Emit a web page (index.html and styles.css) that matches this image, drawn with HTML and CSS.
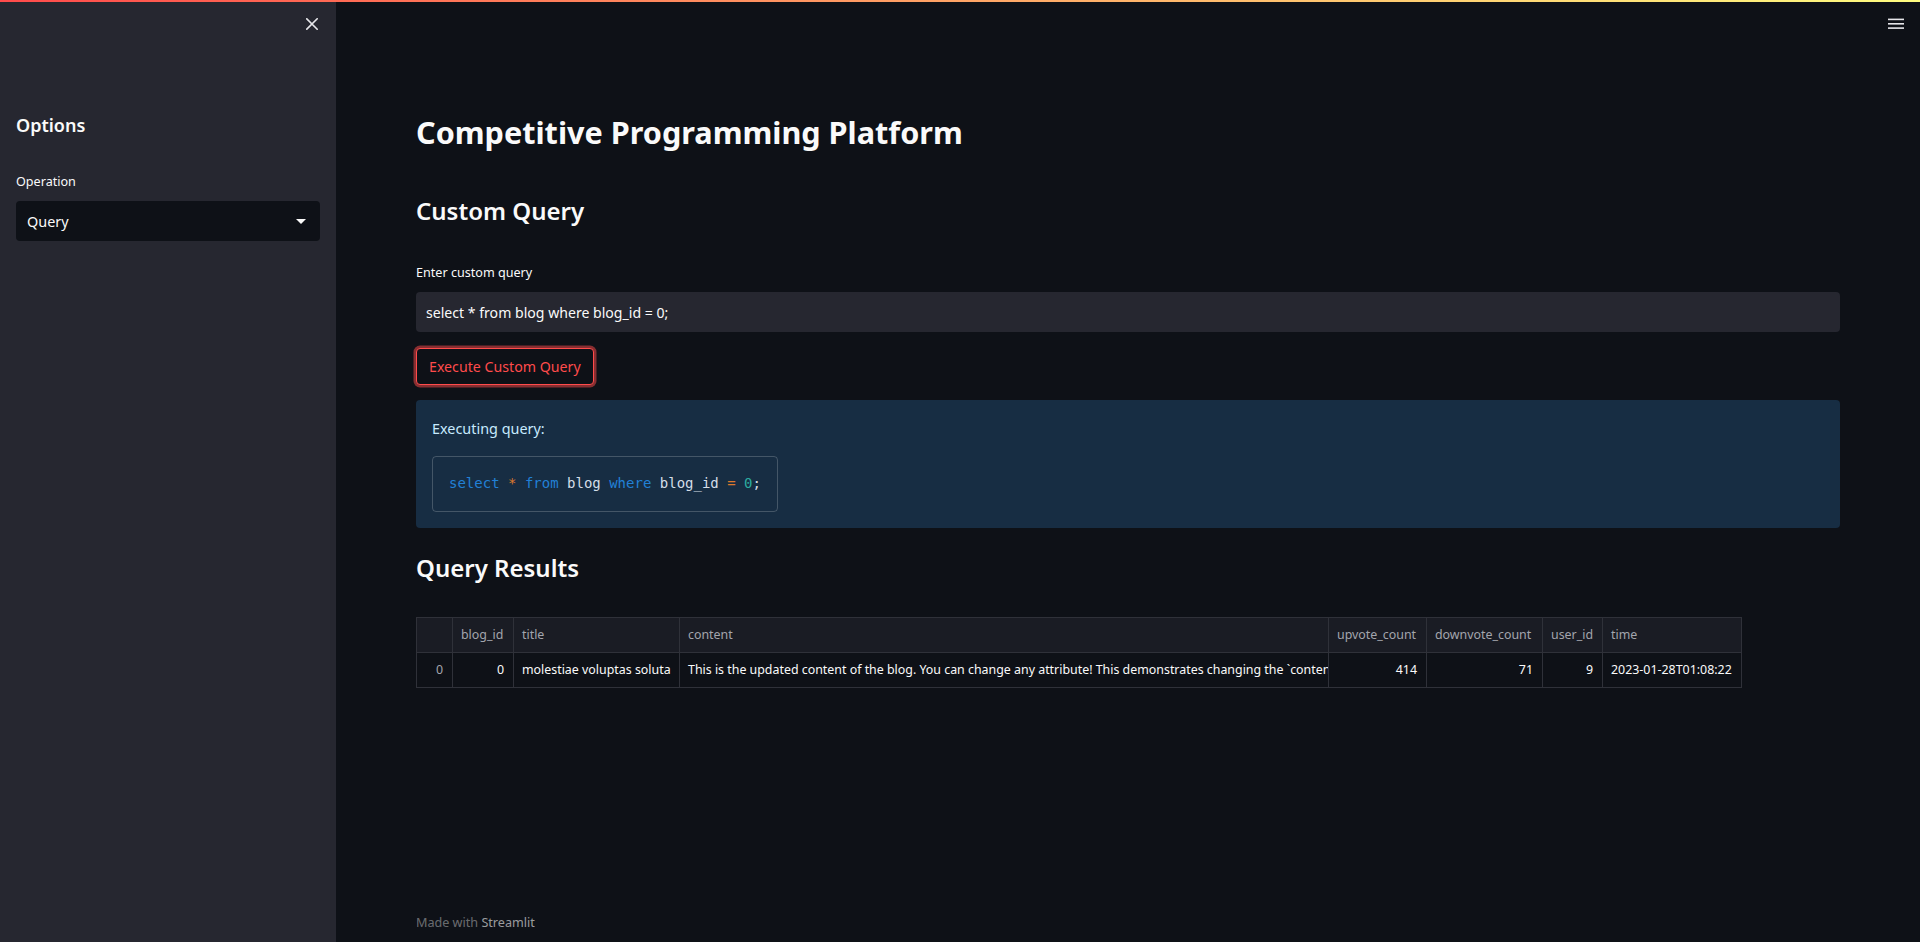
FILE: index.html
```html
<!DOCTYPE html>
<html lang="en">
<head>
<meta charset="utf-8">
<title>Competitive Programming Platform</title>
<link rel="stylesheet" href="styles.css">
</head>
<body>
<div class="decoration"></div>
<div class="app">
  <aside class="sidebar">
    <div class="sb-head">
      <button class="icon-btn" aria-label="Close sidebar">
        <svg width="12" height="12" viewBox="0 0 12 12"><path d="M0.8 0.8L11.2 11.2M11.2 0.8L0.8 11.2" stroke="#e6e6ea" stroke-width="1.6" fill="none" stroke-linecap="square"/></svg>
      </button>
    </div>
    <div class="sb-body">
      <h2 class="sb-title">Options</h2>
      <div class="label">Operation</div>
      <div class="select">
        <span>Query</span>
        <svg width="10" height="5" viewBox="0 0 10 5"><polygon points="0,0 10,0 5,5" fill="#fafafa"/></svg>
      </div>
    </div>
  </aside>
  <main class="main">
    <div class="topbar">
      <svg width="16" height="12" viewBox="0 0 16 12"><rect x="0" y="0.6" width="16" height="1.6" fill="#e6e6ea"/><rect x="0" y="5" width="16" height="1.6" fill="#e6e6ea"/><rect x="0" y="9.3" width="16" height="1.6" fill="#e6e6ea"/></svg>
    </div>
    <div class="block">
      <h1 class="title">Competitive Programming Platform</h1>
      <h2 class="header">Custom Query</h2>
      <div class="label">Enter custom query</div>
      <div class="text-input">select * from blog where blog_id = 0;</div>
      <button class="btn">Execute Custom Query</button>
      <div class="info">
        <p>Executing query:</p>
        <pre class="code"><code><span class="kw">select</span> <span class="op">*</span> <span class="kw">from</span> blog <span class="kw">where</span> blog_id <span class="op">=</span> <span class="num">0</span>;</code></pre>
      </div>
      <h2 class="header results">Query Results</h2>
      <table class="grid">
        <colgroup>
          <col class="c-idx"><col class="c-id"><col class="c-title"><col class="c-content"><col class="c-up"><col class="c-down"><col class="c-user"><col class="c-time">
        </colgroup>
        <thead>
          <tr><th></th><th>blog_id</th><th>title</th><th>content</th><th>upvote_count</th><th>downvote_count</th><th>user_id</th><th>time</th></tr>
        </thead>
        <tbody>
          <tr><td class="idx num-cell">0</td><td class="num-cell">0</td><td>molestiae voluptas soluta</td><td class="clip">This is the updated content of the blog. You can change any attribute! This demonstrates changing the `content` attribute.</td><td class="num-cell">414</td><td class="num-cell">71</td><td class="num-cell">9</td><td>2023-01-28T01:08:22</td></tr>
        </tbody>
      </table>
    </div>
    <footer class="footer">Made with <span class="brand">Streamlit</span></footer>
  </main>
</div>
</body>
</html>
```

FILE: styles.css
```css
* { box-sizing: border-box; }

html, body {
  margin: 0;
  padding: 0;
  height: 100%;
}

body {
  background: #0e1117;
  color: #fafafa;
  font-family: "Noto Sans", "Liberation Sans", sans-serif;
  font-size: 14.4px;
  overflow: hidden;
}

.decoration {
  position: fixed;
  top: 0;
  left: 0;
  right: 0;
  height: 2px;
  background-image: linear-gradient(90deg, rgb(255, 75, 75), rgb(255, 253, 128));
  z-index: 10;
}

.app {
  display: flex;
  height: 942px;
}

/* Sidebar */
.sidebar {
  width: 336px;
  flex-shrink: 0;
  background: #262730;
  display: flex;
  flex-direction: column;
}

.sb-head {
  height: 48px;
  display: flex;
  justify-content: flex-end;
  align-items: center;
  padding-right: 18px;
}

.icon-btn {
  background: none;
  border: none;
  padding: 0;
  margin: 0;
  width: 12px;
  height: 12px;
  display: flex;
}

.sb-body {
  padding: 0 16px;
}

.sb-title {
  margin: 66.6px 0 0;
  font-size: 18px;
  line-height: 21.6px;
  font-weight: 600;
  color: #fafafa;
}

.sb-title + .label {
  margin-top: 35.4px;
}

.label {
  font-size: 12.6px;
  line-height: 20px;
  color: #fafafa;
  margin-bottom: 9.5px;
}

.select {
  height: 40px;
  background: #0e1117;
  border-radius: 4px;
  display: flex;
  align-items: center;
  justify-content: space-between;
  padding: 0 14px 0 11px;
  font-size: 14.4px;
  color: #fafafa;
}

.select svg { display: block; }

/* Main */
.main {
  flex: 1;
  display: flex;
  flex-direction: column;
  min-width: 0;
}

.topbar {
  height: 48px;
  display: flex;
  justify-content: flex-end;
  align-items: center;
  padding-right: 16px;
  flex-shrink: 0;
}

.topbar svg { display: block; }

.block {
  padding: 0 80px;
}

.title {
  margin: 62.7px 0 0;
  font-size: 30.6px;
  line-height: 43px;
  font-weight: 700;
  color: #fafafa;
}

.header {
  margin: 40px 0 0;
  font-size: 24px;
  line-height: 33.6px;
  font-weight: 600;
  color: #fafafa;
}

.header + .label {
  margin-top: 35.6px;
}

.text-input {
  height: 40px;
  background: #262730;
  border-radius: 4px;
  display: flex;
  align-items: center;
  padding: 0 10px;
  font-size: 14.1px;
  color: #fafafa;
}

.btn {
  margin-top: 16px;
  height: 37px;
  padding: 0 12px;
  background: #0e1117;
  border: 1px solid rgb(255, 75, 75);
  border-radius: 4px;
  box-shadow: 0 0 0 2.5px rgba(255, 75, 75, 0.5);
  color: rgb(255, 75, 75);
  font-family: inherit;
  font-size: 14.2px;
  display: block;
}

.info {
  margin-top: 15px;
  background: rgb(23, 45, 67);
  border-radius: 4px;
  padding: 16px;
  color: rgb(199, 235, 255);
}

.info p {
  margin: 0 0 14.4px;
  font-size: 14.4px;
  line-height: 25.6px;
}

.code {
  margin: 0;
  display: inline-block;
  border: 1px solid rgba(250, 250, 250, 0.2);
  border-radius: 4px;
  padding: 15px 16px;
  font-family: "Liberation Mono", "DejaVu Sans Mono", monospace;
  font-size: 14px;
  line-height: 22.4px;
  color: rgb(212, 222, 232);
}

.kw { color: rgb(34, 128, 214); }
.op { color: rgb(222, 120, 46); }
.num { color: rgb(44, 172, 160); }

.results {
  margin-top: 23.6px;
}

/* Data grid */
.grid {
  margin-top: 32.5px;
  width: 1325px;
  table-layout: fixed;
  border-collapse: separate;
  border-spacing: 0;
  border-top: 1px solid #2f3139;
  border-left: 1px solid #2f3139;
  font-size: 12.4px;
}

.c-idx { width: 36px; }
.c-id { width: 61px; }
.c-title { width: 166px; }
.c-content { width: 649px; }
.c-up { width: 98px; }
.c-down { width: 116px; }
.c-user { width: 60px; }
.c-time { width: 139px; }

.grid th, .grid td {
  border-right: 1px solid #2f3139;
  border-bottom: 1px solid #2f3139;
  height: 35px;
  line-height: 34px;
  padding: 0 9px 0 8px;
  white-space: nowrap;
  overflow: hidden;
  text-align: left;
}

.grid td.clip {
  padding-right: 0;
  text-overflow: clip;
}

.grid th {
  background: #1a1c24;
  color: #a3a5ad;
  font-weight: 400;
}

.grid td {
  background: #0e1117;
  color: #fafafa;
}

.grid td.num-cell { text-align: right; }
.grid td.idx { color: #a3a5ad; }

.footer {
  margin-top: auto;
  padding: 0 80px 9px;
  font-size: 12.6px;
  line-height: 20px;
  color: rgba(250, 250, 250, 0.4);
}

.footer .brand {
  color: rgba(250, 250, 250, 0.6);
}
```
